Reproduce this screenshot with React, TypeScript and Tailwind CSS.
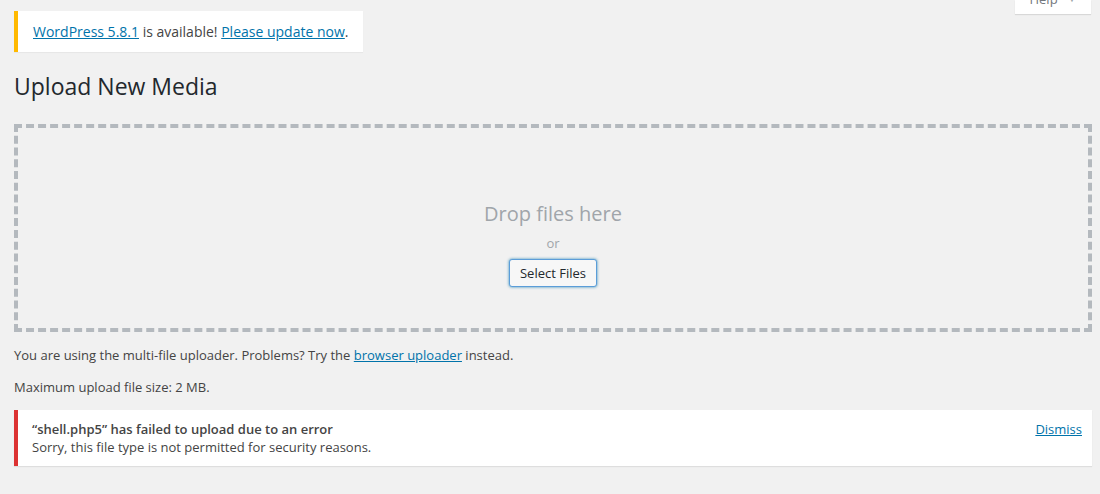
import React from 'react';

function HelpTab() {
    return (
        <div className="mr-[1px] h-[14px] w-[76px] overflow-hidden bg-white shadow-[0_1px_1px_rgba(0,0,0,0.1)]">
            <div className="-mt-[11px] flex items-center justify-center gap-[10px] text-[13px] leading-[20px] text-[#72777c]">
                <span>Help</span>
                <span className="text-[9px] text-[#a0a5aa]">▼</span>
            </div>
        </div>
    );
}

function UpdateNag() {
    return (
        <div className="mt-[11px] inline-block border-l-4 border-[#ffb900] bg-white py-[11px] pl-[15px] pr-[15px] text-[14px] leading-[19px] text-[#444] shadow-[0_1px_1px_rgba(0,0,0,0.04)]">
            <a href="#" className="text-[#0073aa] underline">
                WordPress 5.8.1
            </a>{' '}
            is available!{' '}
            <a href="#" className="text-[#0073aa] underline">
                Please update now
            </a>
            .
        </div>
    );
}

function DropArea() {
    return (
        <div className="mt-[19px] h-[208px] border-4 border-dashed border-[#b4b9be]">
            <div className="flex flex-col items-center pt-[72px]">
                <p className="text-[20px] leading-[28px] text-[#a0a5aa]">
                    Drop files here
                </p>
                <p className="mt-[5px] text-[13px] leading-[20px] text-[#a0a5aa]">
                    or
                </p>
                <button className="mt-[6px] h-[28px] rounded-[3px] border border-[#5b9dd9] bg-[#f7f7f7] px-[10px] text-[13px] leading-[26px] text-[#23282d] shadow-[0_0_3px_rgba(0,115,170,0.8)]">
                    Select Files
                </button>
            </div>
        </div>
    );
}

function ErrorNotice() {
    return (
        <div className="mt-[14px] flex items-start justify-between border-l-4 border-[#dc3232] bg-white pb-[10px] pl-[14px] pr-[10px] pt-[10px] text-[13px] leading-[18px] text-[#444] shadow-[0_1px_1px_rgba(0,0,0,0.08)]">
            <div>
                <p className="font-semibold">
                    “shell.php5” has failed to upload due to an error
                </p>
                <p>Sorry, this file type is not permitted for security reasons.</p>
            </div>
            <a href="#" className="text-[#0073aa] underline">
                Dismiss
            </a>
        </div>
    );
}

export default function App() {
    return (
        <div
            className="min-h-[494px] w-[1100px] bg-[#f1f1f1] pl-[14px] pr-[8px]"
            style={{ fontFamily: '"Open Sans", "Noto Sans", sans-serif' }}
        >
            <div className="flex items-start justify-between">
                <UpdateNag />
                <HelpTab />
            </div>
            <h1 className="pb-[4px] pt-[19px] text-[23px] font-normal leading-[30px] text-[#23282d]">
                Upload New Media
            </h1>
            <DropArea />
            <p className="mt-[14px] text-[13px] leading-[18px] text-[#444]">
                You are using the multi-file uploader. Problems? Try the{' '}
                <a href="#" className="text-[#0073aa] underline">
                    browser uploader
                </a>{' '}
                instead.
            </p>
            <p className="mt-[14px] text-[13px] leading-[18px] text-[#444]">
                Maximum upload file size: 2 MB.
            </p>
            <ErrorNotice />
        </div>
    );
}
